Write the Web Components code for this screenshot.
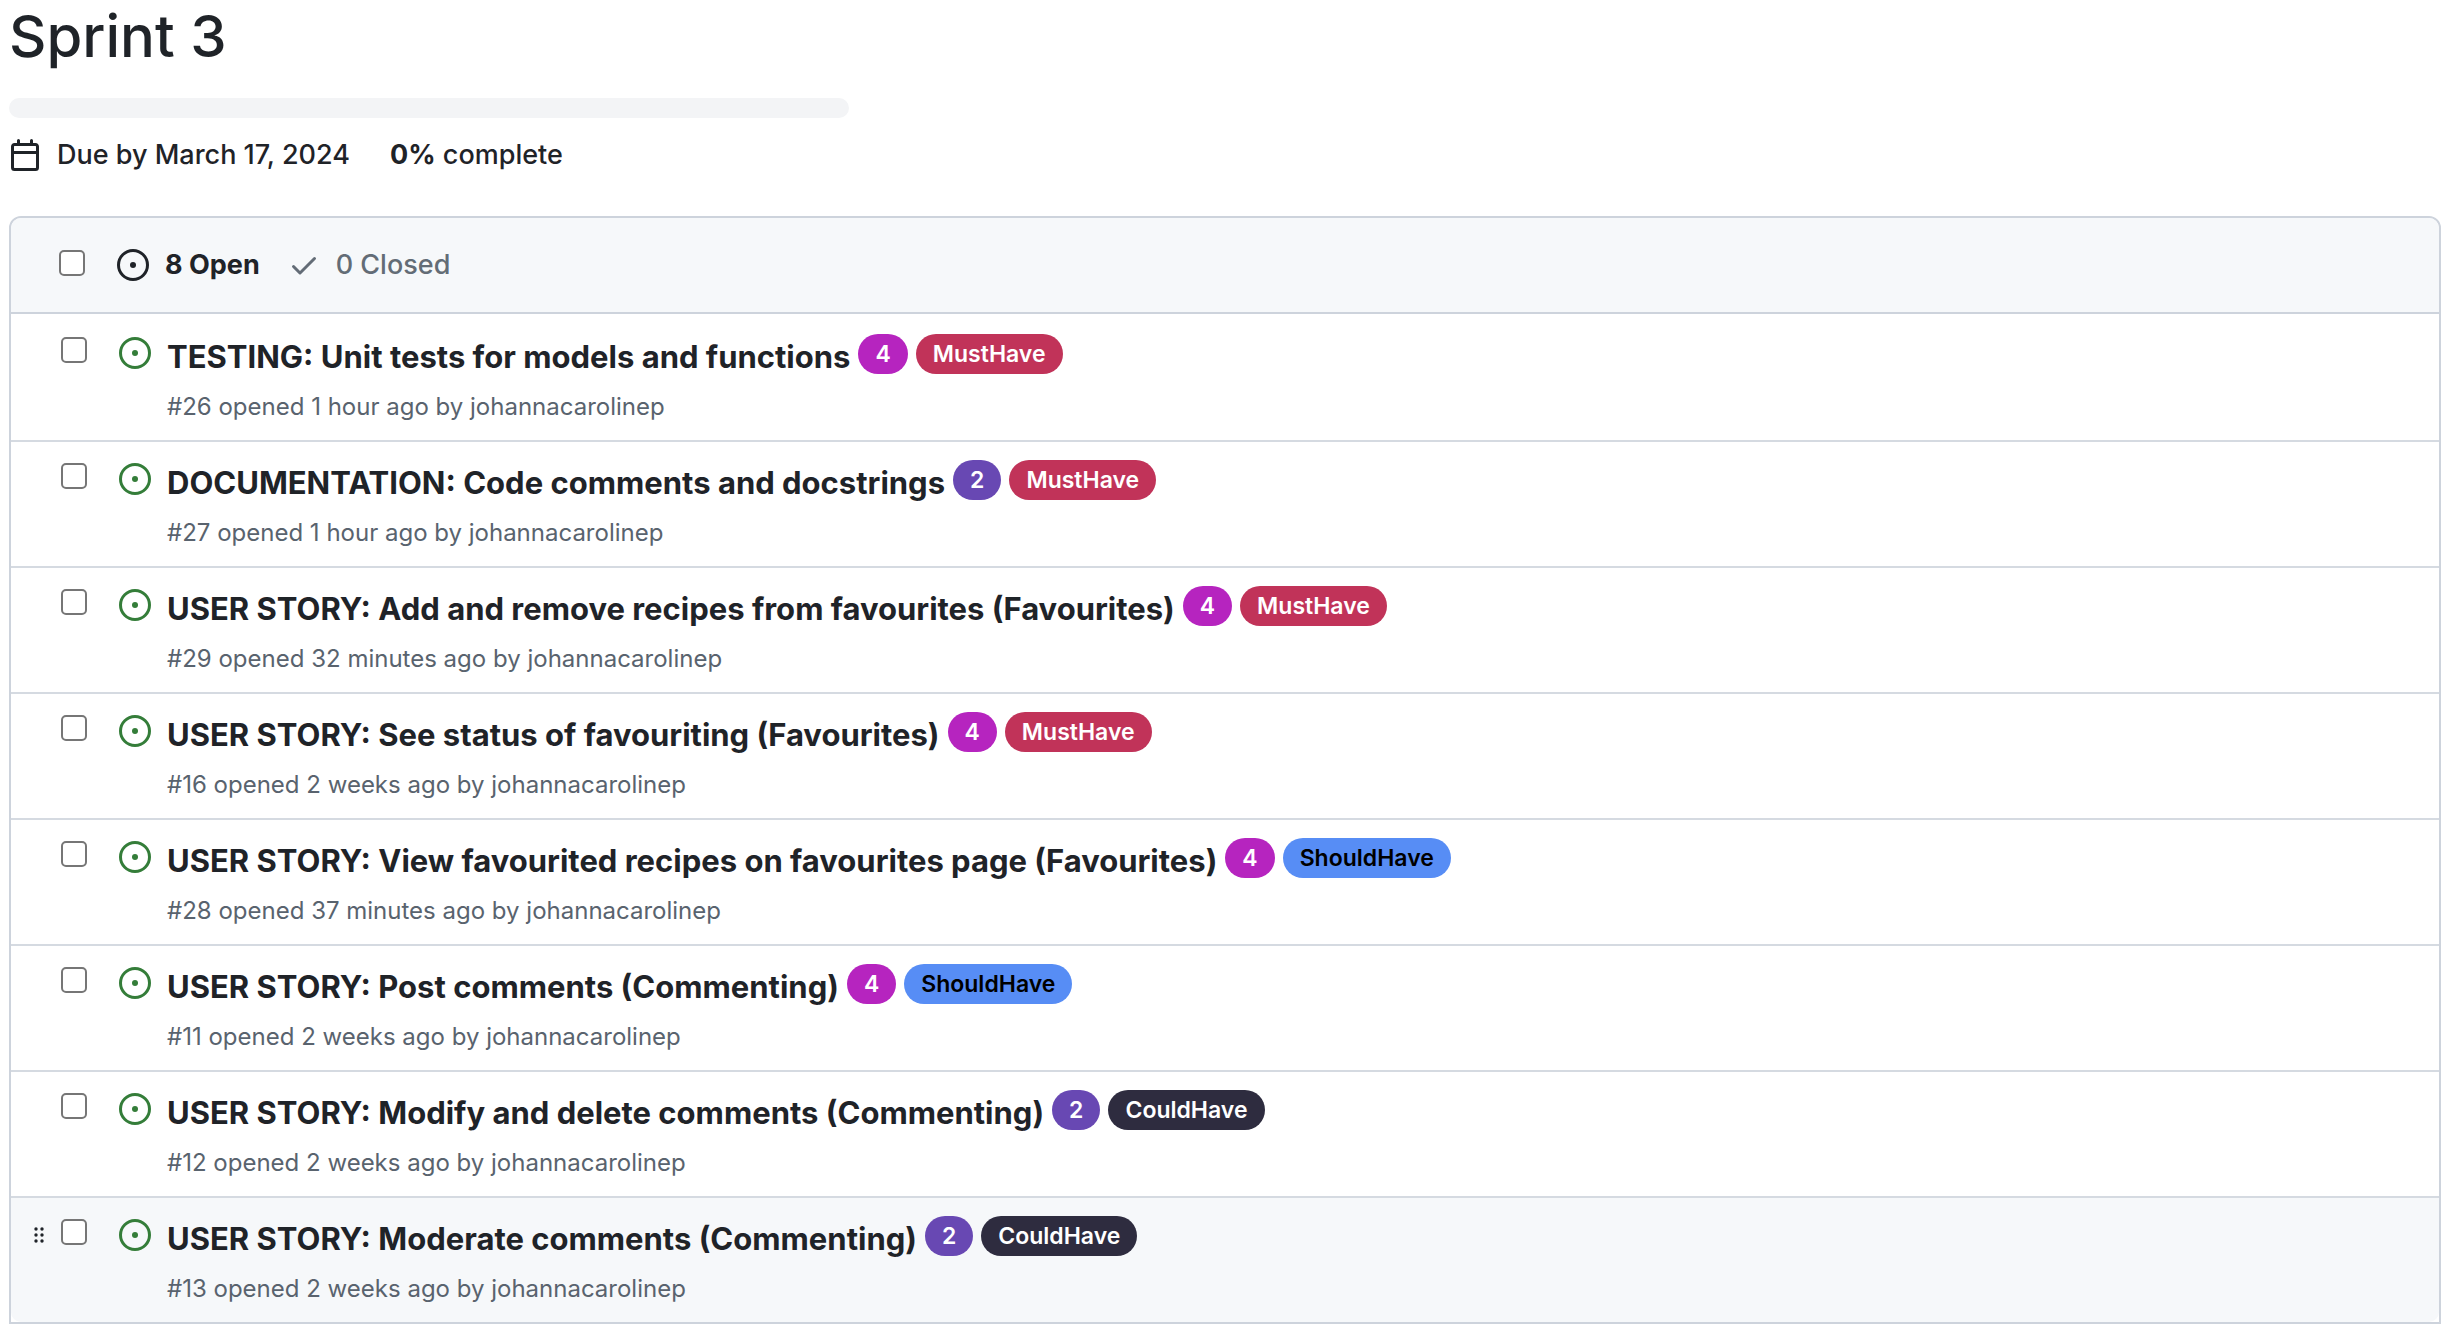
<!DOCTYPE html>
<html lang="en">
<head>
<meta charset="utf-8">
<title>Sprint 3</title>
<style>
  body { margin: 0; background: #fff; color: #1f2328; font-family: Inter, "Liberation Sans", sans-serif; font-size: 28px; }
</style>
</head>
<body>
<milestone-page>
  <milestone-header due="March 17, 2024" percent="0">Sprint 3</milestone-header>
  <issue-list open="8" closed="0">
    <issue-row number="26" opened="1 hour ago" author="johannacarolinep">TESTING: Unit tests for models and functions<issue-label slot="labels" tone="magenta">4</issue-label><issue-label slot="labels" tone="red">MustHave</issue-label></issue-row>
    <issue-row number="27" opened="1 hour ago" author="johannacarolinep">DOCUMENTATION: Code comments and docstrings<issue-label slot="labels" tone="purple">2</issue-label><issue-label slot="labels" tone="red">MustHave</issue-label></issue-row>
    <issue-row number="29" opened="32 minutes ago" author="johannacarolinep">USER STORY: Add and remove recipes from favourites (Favourites)<issue-label slot="labels" tone="magenta">4</issue-label><issue-label slot="labels" tone="red">MustHave</issue-label></issue-row>
    <issue-row number="16" opened="2 weeks ago" author="johannacarolinep">USER STORY: See status of favouriting (Favourites)<issue-label slot="labels" tone="magenta">4</issue-label><issue-label slot="labels" tone="red">MustHave</issue-label></issue-row>
    <issue-row number="28" opened="37 minutes ago" author="johannacarolinep">USER STORY: View favourited recipes on favourites page (Favourites)<issue-label slot="labels" tone="magenta">4</issue-label><issue-label slot="labels" tone="blue">ShouldHave</issue-label></issue-row>
    <issue-row number="11" opened="2 weeks ago" author="johannacarolinep">USER STORY: Post comments (Commenting)<issue-label slot="labels" tone="magenta">4</issue-label><issue-label slot="labels" tone="blue">ShouldHave</issue-label></issue-row>
    <issue-row number="12" opened="2 weeks ago" author="johannacarolinep">USER STORY: Modify and delete comments (Commenting)<issue-label slot="labels" tone="purple">2</issue-label><issue-label slot="labels" tone="dark">CouldHave</issue-label></issue-row>
    <issue-row number="13" opened="2 weeks ago" author="johannacarolinep" active>USER STORY: Moderate comments (Commenting)<issue-label slot="labels" tone="purple">2</issue-label><issue-label slot="labels" tone="dark">CouldHave</issue-label></issue-row>
  </issue-list>
</milestone-page>
<script>
  const checkbox = `
    input { appearance: none; flex: none; box-sizing: border-box; width: 26px; height: 26px; margin: 0;
      border: 2px solid #767676; border-radius: 5px; background: #fff; }
    input:checked { background: #0969da; border-color: #0969da; }`;

  function define(name, render) {
    customElements.define(name, class extends HTMLElement {
      connectedCallback() {
        if (!this.shadowRoot) this.attachShadow({ mode: "open" }).innerHTML = render(this);
      }
    });
  }

  const icons = {
    open: '<path d="M8 9.5a1.5 1.5 0 1 0 0-3 1.5 1.5 0 0 0 0 3Z"/><path d="M8 0a8 8 0 1 1 0 16A8 8 0 0 1 8 0ZM1.5 8a6.5 6.5 0 1 0 13 0 6.5 6.5 0 0 0-13 0Z"/>',
    check: '<path d="M13.78 4.22a.75.75 0 0 1 0 1.06l-7.25 7.25a.75.75 0 0 1-1.06 0L2.22 9.28a.751.751 0 0 1 .018-1.042.751.751 0 0 1 1.042-.018L6 10.94l6.72-6.72a.75.75 0 0 1 1.06 0Z"/>',
    calendar: '<path d="M4.75 0a.75.75 0 0 1 .75.75V2h5V.75a.75.75 0 0 1 1.5 0V2h1.25c.966 0 1.75.784 1.75 1.75v10.5A1.75 1.75 0 0 1 13.25 16H2.75A1.75 1.75 0 0 1 1 14.25V3.75C1 2.784 1.784 2 2.75 2H4V.75A.75.75 0 0 1 4.75 0ZM2.5 7.5v6.75c0 .138.112.25.25.25h10.5a.25.25 0 0 0 .25-.25V7.5Zm10.75-4H2.75a.25.25 0 0 0-.25.25V6h11V3.75a.25.25 0 0 0-.25-.25Z"/>'
  };

  define("octo-icon", el => `
    <style>
      :host { display: block; flex: none; width: 32px; height: 32px; }
      svg { display: block; width: 100%; height: 100%; fill: currentColor; }
    </style>
    <svg viewBox="0 0 16 16" aria-hidden="true">${icons[el.getAttribute("name")]}</svg>`);

  define("milestone-page", () => `
    <style>:host { display: flex; flex-direction: column; gap: 40px; padding: 0 11px 10px 9px; }</style>
    <slot></slot>`);

  define("milestone-header", el => `
    <style>
      :host { display: block; }
      h1 { margin: 0 0 26px; font-size: 58px; font-weight: 450; line-height: 72px; }
      .bar { max-width: 840px; height: 20px; margin-bottom: 16px; border-radius: 10px; background: #f3f4f6; overflow: hidden; }
      .fill { height: 100%; background: #1f883d; }
      .facts { display: flex; flex-wrap: wrap; gap: 40px; font-size: 27px; font-weight: 450; line-height: 42px; }
      .due { display: flex; align-items: center; gap: 16px; }
      b { font-weight: 650; }
    </style>
    <h1><slot></slot></h1>
    <div class="bar" role="progressbar" aria-label="Milestone progress" aria-valuenow="${el.getAttribute("percent")}">
      <div class="fill" style="width:${el.getAttribute("percent")}%"></div>
    </div>
    <div class="facts">
      <span class="due"><octo-icon name="calendar"></octo-icon>Due by ${el.getAttribute("due")}</span>
      <span><b>${el.getAttribute("percent")}%</b> complete</span>
    </div>`);

  define("issue-list", el => `
    <style>
      :host { display: block; border: 2px solid #cdd3dc; border-radius: 12px 12px 0 0; }
      header { display: flex; align-items: flex-start; padding: 31px 32px 31px 48px; gap: 32px;
        background: #f6f8fa; border-bottom: 2px solid #cdd3dc; border-radius: 10px 10px 0 0; }
      ${checkbox}
      input { margin-top: 1px; }
      nav { display: flex; gap: 28px; line-height: 32px; }
      a { display: flex; align-items: center; gap: 16px; color: #636c76; font-size: 27px; font-weight: 450; text-decoration: none; }
      a.current { color: #1f2328; font-weight: 650; }
    </style>
    <header>
      <input type="checkbox" aria-label="Select all issues">
      <nav>
        <a class="current" href="#open"><octo-icon name="open"></octo-icon>${el.getAttribute("open")} Open</a>
        <a href="#closed"><octo-icon name="check"></octo-icon>${el.getAttribute("closed")} Closed</a>
      </nav>
    </header>
    <slot></slot>`);

  define("issue-row", el => `
    <style>
      :host { display: flex; align-items: flex-start; border-top: 2px solid #d5dae1; }
      :host(:first-child) { border-top-color: transparent; }
      :host([active]) { background: #f6f8fa; border-bottom-left-radius: 10px; border-bottom-right-radius: 10px; }
      .grip { flex: none; width: 50px; padding: 29px 17px 0 23px; box-sizing: border-box; }
      .grip svg { display: block; width: 10px; height: 16px; fill: #1f2328; visibility: hidden; }
      :host([active]) .grip svg { visibility: visible; }
      ${checkbox}
      input { margin-top: 21px; }
      octo-icon { margin: 21px 16px 0 32px; color: #347d39; }
      .body { padding: 17px 32px 15px 0; }
      .head { display: flex; flex-wrap: wrap; align-items: flex-start; column-gap: 8px; }
      .title { font-size: 31px; font-weight: 650; line-height: 48px; color: #1f2328; text-decoration: none; }
      .meta { margin-top: 8px; font-size: 24px; line-height: 36px; color: #59636e; }
      .meta a { color: inherit; text-decoration: none; }
    </style>
    <span class="grip"><svg viewBox="0 0 10 16" aria-hidden="true"><circle cx="2" cy="2" r="1.7"/><circle cx="8" cy="2" r="1.7"/><circle cx="2" cy="8" r="1.7"/><circle cx="8" cy="8" r="1.7"/><circle cx="2" cy="14" r="1.7"/><circle cx="8" cy="14" r="1.7"/></svg></span>
    <input type="checkbox" aria-label="Select issue ${el.getAttribute("number")}">
    <octo-icon name="open"></octo-icon>
    <div class="body">
      <div class="head"><a class="title" href="#${el.getAttribute("number")}"><slot></slot></a><slot name="labels"></slot></div>
      <div class="meta">#${el.getAttribute("number")} opened ${el.getAttribute("opened")} by <a href="#author">${el.getAttribute("author")}</a></div>
    </div>`);

  define("issue-label", () => `
    <style>
      :host { display: block; margin-top: 1px; border-radius: 20px; font-size: 23px; font-weight: 600; line-height: 40px; }
      :host([tone="magenta"]) { background: #b624bf; color: #fff; }
      :host([tone="purple"]) { background: #6848b3; color: #fff; }
      :host([tone="red"]) { background: #c13359; color: #fff; }
      :host([tone="blue"]) { background: #578df5; color: #000; }
      :host([tone="dark"]) { background: #2e2c3f; color: #fff; }
      a { display: block; padding: 0 17px; color: inherit; text-decoration: none; }
    </style>
    <a href="#label"><slot></slot></a>`);
</script>
</body>
</html>
